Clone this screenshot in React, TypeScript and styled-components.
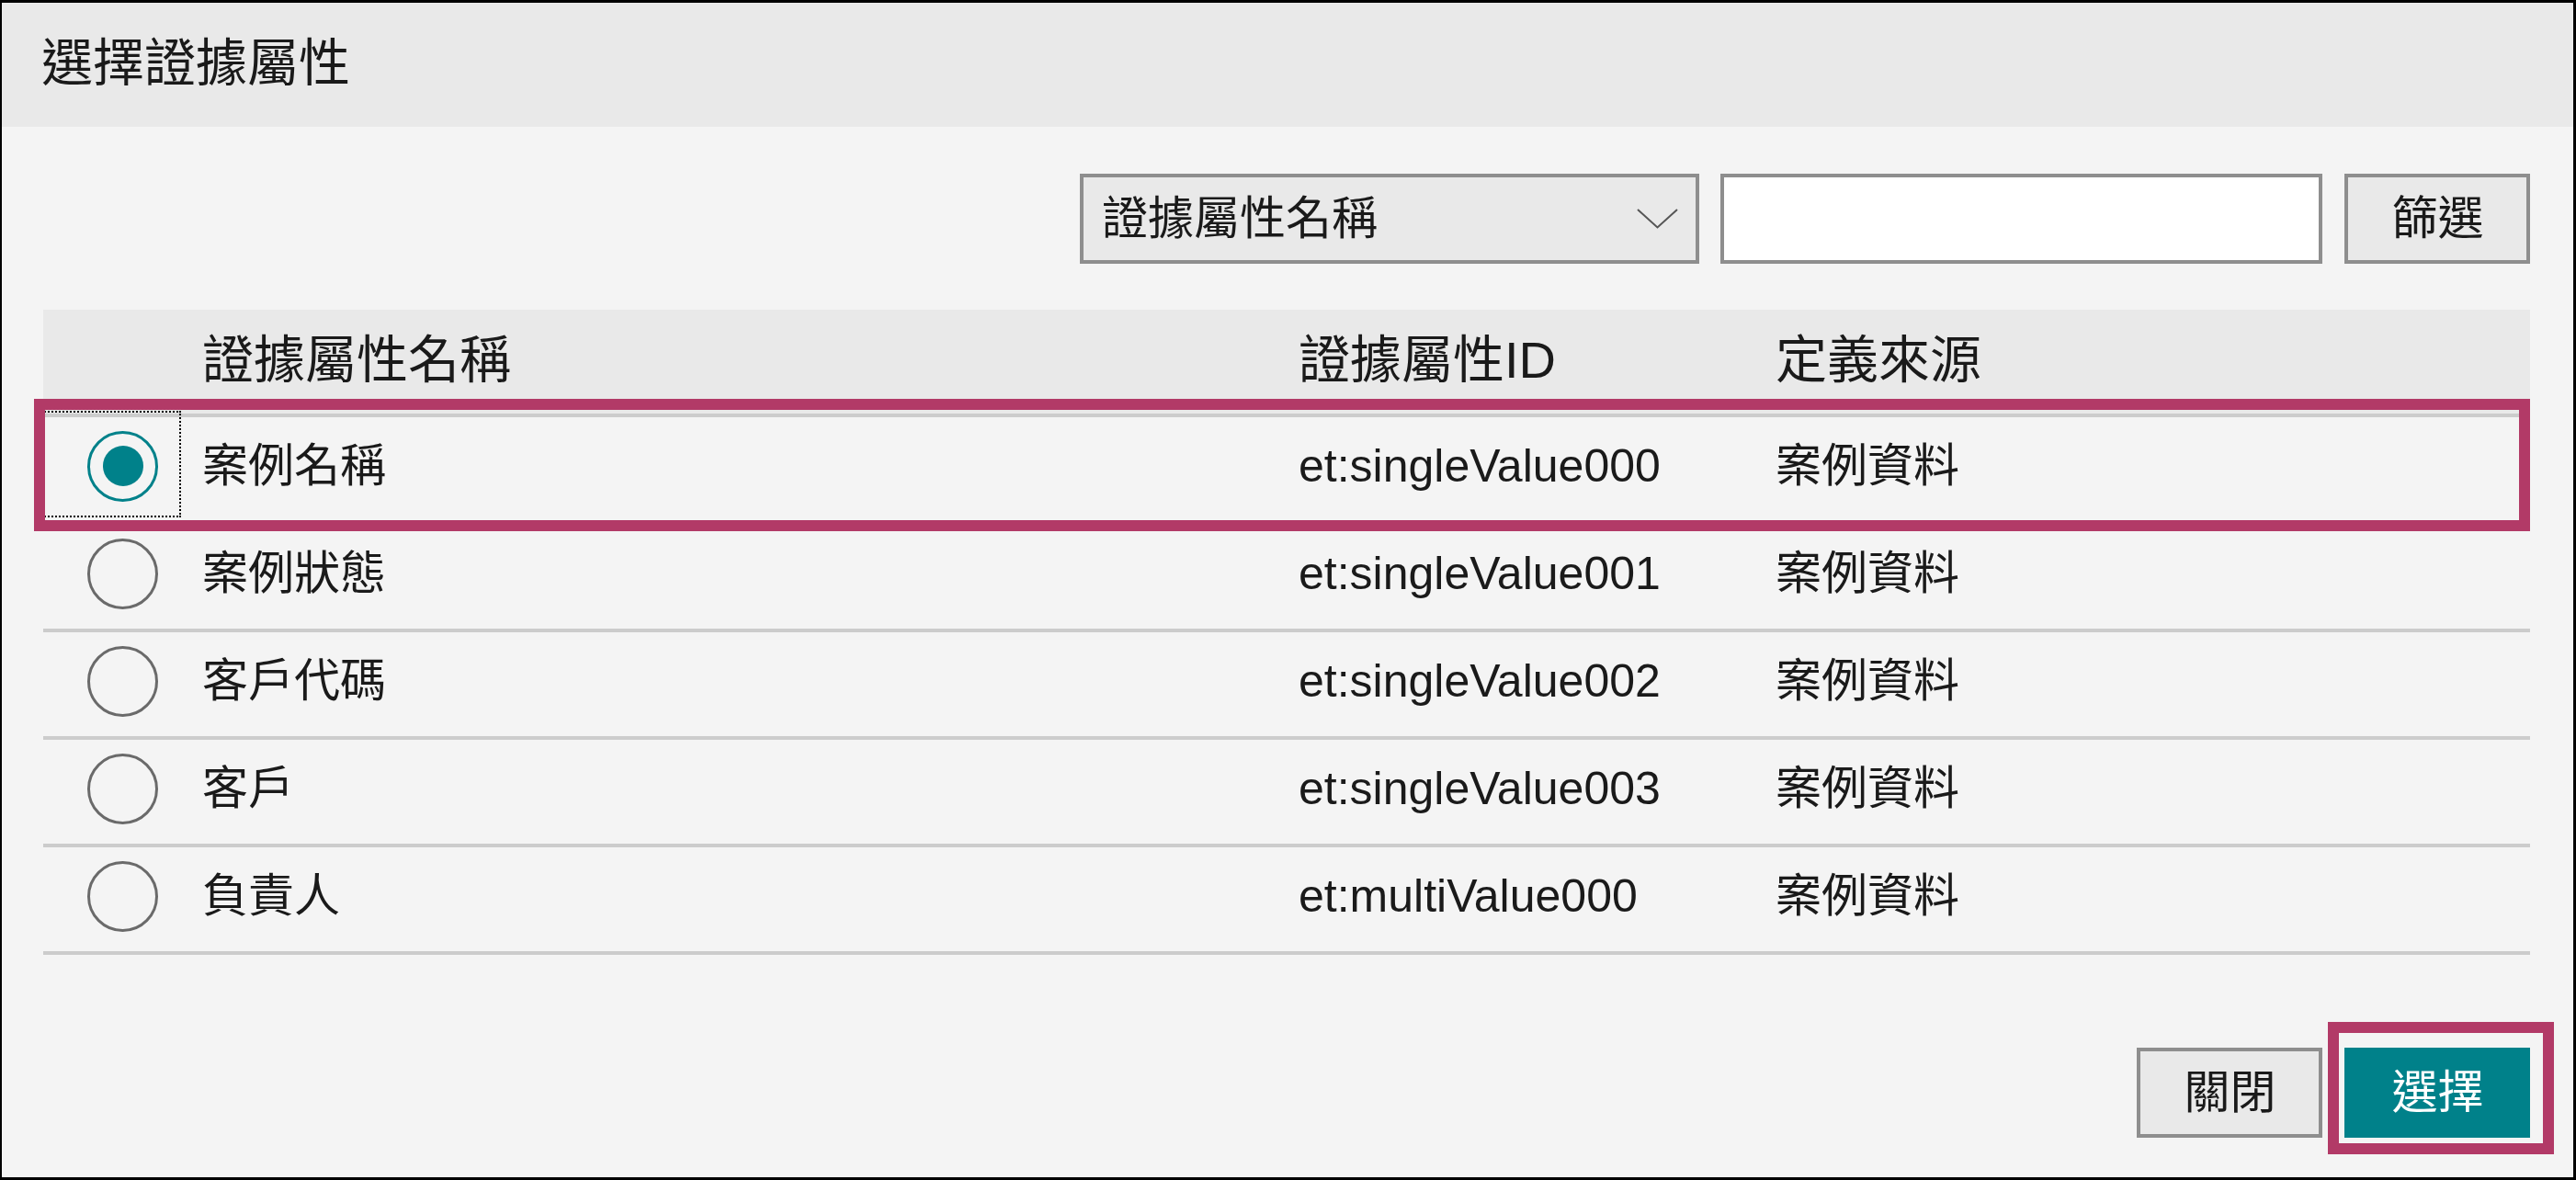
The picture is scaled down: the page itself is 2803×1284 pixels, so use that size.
import React from "react";
import styled, { createGlobalStyle, css } from "styled-components";

const GlobalStyle = createGlobalStyle`
  html, body {
    margin: 0;
    padding: 0;
    background: #ffffff;
  }
  * { box-sizing: border-box; }
`;

const FONT = `"Liberation Sans", "Noto Sans CJK TC", "Noto Sans CJK SC", sans-serif`;
const TEAL = "#00818a";
const PINK = "#b23a67";
const BORDER_GRAY = "#8e8e8e";

const Dialog = styled.div`
  width: 2803px;
  height: 1284px;
  border: 3px solid #000;
  border-left-width: 2px;
  background: #f4f4f4;
  display: flex;
  flex-direction: column;
  font-family: ${FONT};
  color: #1a1a1a;
  line-height: 1;
`;

const TitleBar = styled.div`
  height: 135px;
  flex: none;
  background: #e9e9e9;
  display: flex;
  align-items: center;
  padding: 0 0 4px 43px;
  font-size: 56px;
`;

const Body = styled.div`
  flex: 1;
  display: flex;
  flex-direction: column;
  padding: 0 47px 0 45px;
`;

const FilterRow = styled.div`
  margin-top: 51px;
  display: flex;
  justify-content: flex-end;
  gap: 23px;
`;

const Dropdown = styled.div`
  width: 674px;
  height: 98px;
  border: 4px solid ${BORDER_GRAY};
  background: #e9e9e9;
  display: flex;
  align-items: center;
  justify-content: space-between;
  padding: 0 19px 0 20px;
  font-size: 50px;
`;

const TextInput = styled.input`
  width: 655px;
  height: 98px;
  border: 4px solid ${BORDER_GRAY};
  background: #ffffff;
  outline: none;
  font-family: ${FONT};
  font-size: 50px;
  padding: 0 20px;
  margin: 0 1px 0 0;
`;

const Button = styled.button<{ $primary?: boolean }>`
  width: 202px;
  height: 98px;
  margin: 0;
  padding: 0 0 0 1px;
  font-family: ${FONT};
  font-size: 50px;
  line-height: 1;
  cursor: pointer;
  display: flex;
  align-items: center;
  justify-content: center;
  ${(p) =>
    p.$primary
      ? css`
          background: ${TEAL};
          color: #ffffff;
          border: 4px solid ${TEAL};
        `
      : css`
          background: #e9e9e9;
          color: #1a1a1a;
          border: 4px solid ${BORDER_GRAY};
        `}
`;

const Table = styled.div`
  margin-top: 50px;
  display: flex;
  flex-direction: column;
  border-bottom: 4px solid #cccccc;
`;

const GRID = "150px 1193px 519px 1fr";

const HeaderRow = styled.div`
  display: grid;
  grid-template-columns: ${GRID};
  height: 113px;
  background: #e9e9e9;
  align-items: center;
  padding-bottom: 4px;
  font-size: 56px;
`;

const Row = styled.div`
  display: grid;
  grid-template-columns: ${GRID};
  height: 117px;
  border-top: 4px solid #cccccc;
  padding-bottom: 7px;
  align-items: stretch;
  font-size: 50px;
`;

const Cell = styled.div`
  display: flex;
  align-items: center;
  padding-left: 23px;
  white-space: nowrap;
`;

const RadioCell = styled.div<{ $focused?: boolean }>`
  position: relative;
  display: flex;
  align-items: center;
  padding-left: 48px;
  ${(p) =>
    p.$focused &&
    css`
      &::after {
        content: "";
        position: absolute;
        top: -7px;
        bottom: -3px;
        left: -6px;
        right: 0;
        border: 2px dotted #000;
      }
    `}
`;

const Radio = styled.span<{ $checked?: boolean }>`
  width: 77px;
  height: 77px;
  border-radius: 50%;
  border: 3px solid ${(p) => (p.$checked ? TEAL : "#6a6a6a")};
  background: #f4f4f4;
  display: flex;
  align-items: center;
  justify-content: center;
  &::after {
    content: "";
    width: 44px;
    height: 44px;
    border-radius: 50%;
    background: ${(p) => (p.$checked ? TEAL : "transparent")};
  }
`;

const HighlightWrap = styled.div`
  position: relative;
`;

const Highlight = styled.div<{ $t: number; $r: number; $b: number; $l: number }>`
  position: absolute;
  top: ${(p) => p.$t}px;
  right: ${(p) => p.$r}px;
  bottom: ${(p) => p.$b}px;
  left: ${(p) => p.$l}px;
  border: 12px solid ${PINK};
  pointer-events: none;
  z-index: 2;
`;

const Footer = styled.div`
  margin-top: 101px;
  display: flex;
  justify-content: flex-end;
  gap: 24px;
`;

const ButtonWrap = styled.div`
  position: relative;
`;

const Chevron = () => (
  <svg width="45" height="22" viewBox="0 0 45 22" fill="none">
    <polyline points="1,1 22.5,20.5 44,1" stroke="#555" strokeWidth="2" />
  </svg>
);

type Item = { name: string; id: string; src: string };

const items: Item[] = [
  { name: "案例名稱", id: "et:singleValue000", src: "案例資料" },
  { name: "案例狀態", id: "et:singleValue001", src: "案例資料" },
  { name: "客戶代碼", id: "et:singleValue002", src: "案例資料" },
  { name: "客戶", id: "et:singleValue003", src: "案例資料" },
  { name: "負責人", id: "et:multiValue000", src: "案例資料" },
];

function DataRow({ item, selected }: { item: Item; selected: boolean }) {
  return (
    <Row>
      <RadioCell $focused={selected}>
        <Radio $checked={selected} />
      </RadioCell>
      <Cell>{item.name}</Cell>
      <Cell>{item.id}</Cell>
      <Cell>{item.src}</Cell>
    </Row>
  );
}

export default function App() {
  return (
    <>
      <GlobalStyle />
      <Dialog>
        <TitleBar>選擇證據屬性</TitleBar>
        <Body>
          <FilterRow>
            <Dropdown>
              <span>證據屬性名稱</span>
              <Chevron />
            </Dropdown>
            <TextInput type="text" />
            <Button>篩選</Button>
          </FilterRow>
          <Table>
            <HeaderRow>
              <div />
              <Cell>證據屬性名稱</Cell>
              <Cell>證據屬性ID</Cell>
              <Cell>定義來源</Cell>
            </HeaderRow>
            {items.map((item, i) =>
              i === 0 ? (
                <HighlightWrap key={item.id}>
                  <DataRow item={item} selected />
                  <Highlight $t={-16} $r={0} $b={-11} $l={-10} />
                </HighlightWrap>
              ) : (
                <DataRow key={item.id} item={item} selected={false} />
              )
            )}
          </Table>
          <Footer>
            <Button>關閉</Button>
            <ButtonWrap>
              <Button $primary>選擇</Button>
              <Highlight $t={-28} $r={-26} $b={-18} $l={-18} />
            </ButtonWrap>
          </Footer>
        </Body>
      </Dialog>
    </>
  );
}
